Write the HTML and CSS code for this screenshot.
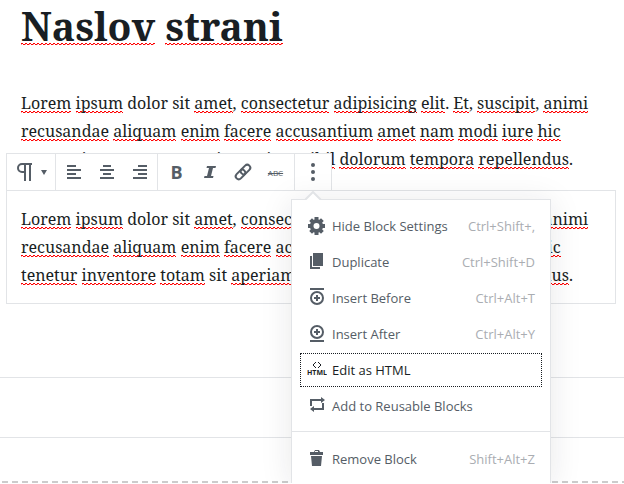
FILE: index.html
```html
<!DOCTYPE html>
<html lang="sl">
<head>
<meta charset="utf-8">
<title>Naslov strani</title>
<link rel="stylesheet" href="styles.css">
</head>
<body>
<main class="editor">
  <h1 class="title"><u>Naslov</u> <u>strani</u></h1>
  <p class="copy"><u>Lorem</u> <u>ipsum</u> dolor sit <u>amet</u>, <u>consectetur</u> <u>adipisicing</u> <u>elit</u>. <u>Et</u>, <u>suscipit</u>, <u>animi</u><br><u>recusandae</u> <u>aliquam</u> <u>enim</u> <u>facere</u> <u>accusantium</u> <u>amet</u> <u>nam</u> <u>modi</u> <u>iure</u> <u>hic</u><br><u>tenetur</u> <u>inventore</u> <u>totam</u> sit <u>aperiam</u> <u>nihil</u> <u>dolorum</u> <u>tempora</u> <u>repellendus</u>.</p>
  <section class="block">
    <p class="copy"><u>Lorem</u> <u>ipsum</u> dolor sit <u>amet</u>, <u>consectetur</u> <u>adipisicing</u> <u>elit</u>. <u>Et</u>, <u>suscipit</u>, <u>animi</u><br><u>recusandae</u> <u>aliquam</u> <u>enim</u> <u>facere</u> <u>accusantium</u> <u>amet</u> <u>nam</u> <u>modi</u> <u>iure</u> <u>hic</u><br><u>tenetur</u> <u>inventore</u> <u>totam</u> sit <u>aperiam</u> <u>nihil</u> <u>dolorum</u> <u>tempora</u> <u>repellendus</u>.</p>
    <div class="toolbar" role="toolbar" aria-label="Block tools">
      <div class="group">
        <button class="tool type" aria-label="Change block type">
          <svg width="32" height="20" viewBox="0 0 32 20"><path d="M17 1H7a5 5 0 0 0 0 10h2v8h2V3h3v16h2V3h1z"/><path class="hole" d="M9 3v6H7a3 3 0 0 1 0-6z"/><path d="M26 8h6l-3 5z"/></svg>
        </button>
      </div>
      <div class="group aligns">
        <button class="tool" aria-label="Align left"><svg width="20" height="20" viewBox="0 0 20 20"><path d="M3 3h9v2H3zM3 7h14v2H3zM3 11h9v2H3zM3 15h14v2H3z"/></svg></button>
        <button class="tool" aria-label="Align center"><svg width="20" height="20" viewBox="0 0 20 20"><path d="M6 3h8v2H6zM3 7h14v2H3zM6 11h8v2H6zM3 15h14v2H3z"/></svg></button>
        <button class="tool" aria-label="Align right"><svg width="20" height="20" viewBox="0 0 20 20"><path d="M8 3h9v2H8zM3 7h14v2H3zM8 11h9v2H8zM3 15h14v2H3z"/></svg></button>
      </div>
      <div class="group formats">
        <button class="tool bold">B</button>
        <button class="tool" aria-label="Italic"><svg width="20" height="20" viewBox="0 0 20 20"><path d="M7 4h9l-.5 2H13l-2 8h2.500l-.5 2H4l.5-2H7l2-8H6.500z"/></svg></button>
        <button class="tool" aria-label="Link"><svg width="20" height="20" viewBox="0 0 20 20"><g class="line" transform="rotate(-45 10 10)"><rect x="1" y="7" width="11" height="6" rx="3"/><rect x="8" y="7" width="11" height="6" rx="3"/></g></svg></button>
        <button class="tool strike">ABC</button>
      </div>
      <div class="group">
        <button class="tool more" aria-label="More options"><svg width="20" height="20" viewBox="0 0 20 20"><circle cx="10" cy="3" r="2"/><circle cx="10" cy="10" r="2"/><circle cx="10" cy="17" r="2"/></svg></button>
      </div>
    </div>
    <div class="menu" role="menu">
      <svg class="arrow" width="18" height="9" viewBox="0 0 18 9"><path d="M1 9 9 1l8 8"/></svg>
      <div class="items">
        <button role="menuitem"><svg width="20" height="20" viewBox="0 0 20 20"><path d="M18 12V8h-2.200a6 6 0 0 0-.6-1.400L16.800 5 14 2.200l-1.600 1.600A6 6 0 0 0 11.500 3.400V1h-4v2.400a6 6 0 0 0-1 .4L5 2.200 2.200 5l1.500 1.600A6 6 0 0 0 3.200 8H1v4h2.200a6 6 0 0 0 .5 1.400L2.200 15 5 17.800l1.500-1.600 1 .4V19h4v-2.400l1-.4 1.500 1.600 2.800-2.800-1.600-1.600a6 6 0 0 0 .6-1.400z"/><circle class="hole" cx="9.500" cy="10" r="3"/></svg><span>Hide Block Settings</span><kbd>Ctrl+Shift+,</kbd></button>
        <button role="menuitem"><svg width="20" height="20" viewBox="0 0 20 20"><path d="M6 1h10v13H6zM3 4h2v11h8v2H3z"/></svg><span>Duplicate</span><kbd>Ctrl+Shift+D</kbd></button>
        <button role="menuitem"><svg width="20" height="20" viewBox="0 0 20 20"><path d="M3 0h14v2H3zM9 7h2v2h2v2h-2v2H9v-2H7V9h2z"/><circle class="line" cx="10" cy="10" r="6"/></svg><span>Insert Before</span><kbd>Ctrl+Alt+T</kbd></button>
        <button role="menuitem"><svg width="20" height="20" viewBox="0 0 20 20"><path d="M3 16h14v2H3zM9 5h2v2h2v2h-2v2H9V9H7V7h2z"/><circle class="line" cx="10" cy="8" r="6"/></svg><span>Insert After</span><kbd>Ctrl+Alt+Y</kbd></button>
        <button role="menuitem" class="current"><svg width="20" height="20" viewBox="0 0 20 20"><path class="line" d="M9 2 6 5l3 3M11 2l3 3-3 3"/><text x="10" y="15">HTML</text></svg><span>Edit as HTML</span></button>
        <button role="menuitem"><svg width="20" height="20" viewBox="0 0 20 20"><path d="M3 10V3h11V1l4 3-4 3V5H5v5zM17 7v7H7v2l-4-3 4-3v2h8V7z"/></svg><span>Add to Reusable Blocks</span></button>
      </div>
      <div class="items last">
        <button role="menuitem"><svg width="20" height="20" viewBox="0 0 20 20"><path d="M3 3h4l1-2h4l1 2h3v3H3zM4 7h11l-1 10H5z"/><path class="hole" d="M8 2h3v1H8z"/></svg><span>Remove Block</span><kbd>Shift+Alt+Z</kbd></button>
      </div>
    </div>
  </section>
</main>
<div class="panels">
  <div class="panel"></div>
  <div class="panel"></div>
  <div class="dashes"></div>
</div>
</body>
</html>
```
FILE: styles.css
```css
* { box-sizing: border-box; }
body {
  margin: 0;
  background: #fff;
  color: #191e23;
  font-family: "Noto Serif", "DejaVu Serif", serif;
  overflow: hidden;
}
.editor { padding: 0 8px 0 6px; }
.title {
  --wave: 7px;
  margin: 0;
  padding: 0 15px;
  font-size: 39px;
  line-height: 52px;
}
.copy {
  --wave: 1px;
  margin: 0;
  padding: 0 15px;
  font-size: 16px;
  line-height: 28px;
  white-space: nowrap;
}
.title + .copy { margin-top: 37px; }
u {
  text-decoration: none;
  background:
    linear-gradient(90deg, #f00 2px, transparent 2px) 0 calc(100% - var(--wave) - 1px) / 4px 1px repeat-x,
    linear-gradient(90deg, #f99 1px, transparent 1px 2px, #f00 2px) 0 calc(100% - var(--wave)) / 4px 1px repeat-x;
}
.block {
  position: relative;
  margin-top: 17px;
  padding: 14px 0;
  border: 1px solid #e2e4e7;
}
.block .copy { padding: 0 14px; }
.toolbar {
  position: absolute;
  left: -1px;
  bottom: 100%;
  display: flex;
  height: 38px;
  border: 1px solid #e2e4e7;
  background: #fff;
}
.group { display: flex; padding: 0 3px; }
.group + .group { border-left: 1px solid #e2e4e7; }
.group.aligns { padding: 0 1px; }
.group.formats { padding: 0 2px; }
button {
  border: 0;
  background: none;
  color: #555d66;
  font-family: "Open Sans", sans-serif;
  font-size: 13px;
}
.tool {
  display: flex;
  align-items: center;
  justify-content: center;
  width: 33px;
  padding: 0;
}
.type { width: 42px; }
.more { width: 30px; }
.bold { font-size: 18px; font-weight: 700; }
.strike { font-size: 8px; text-decoration: line-through; }
svg { flex: none; fill: #555d66; }
.line { fill: none; stroke: #555d66; stroke-width: 2px; }
.hole { fill: #fff; }
.menu {
  position: absolute;
  top: 8px;
  left: 284px;
  width: 260px;
  border: 1px solid #e2e4e7;
  background: #fff;
  box-shadow: 0 3px 30px rgba(25, 30, 35, .1);
}
.arrow { position: absolute; top: -9px; left: 12px; }
.arrow path { fill: #fff; stroke: #e2e4e7; stroke-width: 2px; }
.items { padding: 8px 8px 7px; }
.items + .items { border-top: 1px solid #e2e4e7; padding: 9px 8px 6px; }
.items button {
  display: flex;
  align-items: center;
  width: 100%;
  height: 36px;
  padding: 0 7px;
  text-align: left;
  white-space: nowrap;
}
.items svg { margin-right: 5px; }
.items span { flex: 1; }
kbd { font-family: inherit; color: #aaadb2; }
.items .current {
  height: 34px;
  margin: 1px 0;
  padding-left: 6px;
  border: 1px dotted #191e23;
  color: #191e23;
}
.current .line { stroke: #191e23; stroke-width: 1px; }
.current text {
  fill: #191e23;
  font-size: 7px;
  font-weight: 700;
  text-anchor: middle;
}
.panels { margin-top: 73px; }
.panel { height: 60px; border-top: 1px solid #e2e4e7; }
.panel + .panel { height: 44px; }
.dashes {
  height: 2px;
  background: repeating-linear-gradient(90deg, transparent 0 2px, #ccc 2px 8px, transparent 8px 10px);
}
```
